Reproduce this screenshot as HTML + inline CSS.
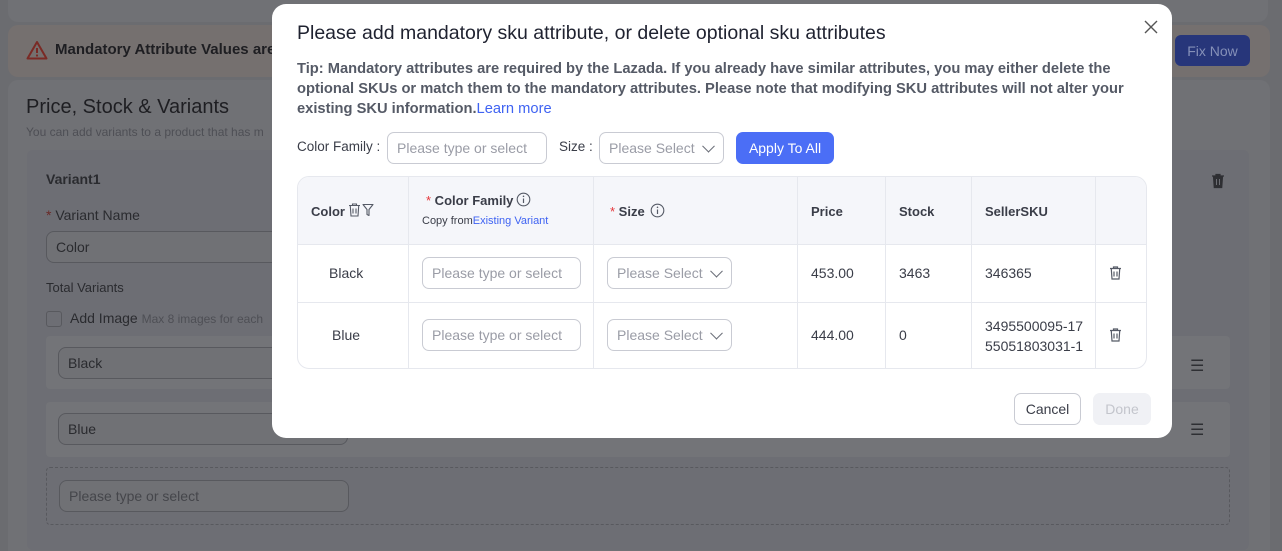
<!DOCTYPE html>
<html><head><meta charset="utf-8"><style>
*{box-sizing:border-box;margin:0;padding:0}
html,body{width:1282px;height:551px;overflow:hidden;background:#6b6c70}
body{font-family:"Liberation Sans",Arial,sans-serif;position:relative}
.a{position:absolute}
.inp{position:absolute;border:1px solid #c9cbd3;border-radius:7px;background:#fff;color:#9a9ca6;font-size:14px;padding-left:9px;display:flex;align-items:center;white-space:nowrap}
.bginp{position:absolute;border:1px solid #58595e;border-radius:8px;color:#2a2b2f;font-size:14px;padding-left:9px;display:flex;align-items:center;background:#707175}
.chev{position:absolute;right:10px;top:50%;width:9px;height:9px;border-right:1.5px solid #6b6e78;border-bottom:1.5px solid #6b6e78;transform:translateY(-70%) rotate(45deg)}
.th{position:absolute;font-size:13px;font-weight:bold;color:#3a3d48}
.td{position:absolute;font-size:14px;color:#3a3d48}
.vl{position:absolute;top:0;width:1px;height:193px;background:#e6e8ee}
.star{color:#e5363a;font-weight:normal}
</style></head><body>
<div class="a" style="left:8px;top:-10px;width:1260px;height:32px;background:#707175;border-radius:10px"></div>
<div class="a" style="left:8px;top:25px;width:1262px;height:52px;background:#75706f;border-radius:10px"></div>
<svg class="a" style="left:26px;top:40px" width="22" height="20" viewBox="0 0 22 20"><path d="M11 2L20.5 18.5H1.5Z" fill="none" stroke="#7a2a25" stroke-width="2" stroke-linejoin="round"/><path d="M11 8v5" stroke="#7a2a25" stroke-width="2"/><circle cx="11" cy="15.5" r="1.1" fill="#7a2a25"/></svg>
<div class="a" style="left:55px;top:41px;font-size:15px;font-weight:bold;color:#1e1e22">Mandatory Attribute Values are</div>
<div class="a" style="left:1175px;top:35px;width:75px;height:31px;background:#27367a;border-radius:6px;color:#8590b8;font-size:14px;display:flex;align-items:center;justify-content:center">Fix Now</div>
<div class="a" style="left:8px;top:80px;width:1262px;height:480px;background:#707175;border-radius:10px"></div>
<div class="a" style="left:26px;top:96px;font-size:20px;color:#1e1e22">Price, Stock &amp; Variants</div>
<div class="a" style="left:26px;top:125px;font-size:12px;color:#4e4f55">You can add variants to a product that has m</div>
<div class="a" style="left:27px;top:150px;width:1222px;height:400px;background:#6d6e74;border-radius:6px"></div>
<div class="a" style="left:46px;top:171px;font-size:14px;font-weight:bold;color:#2a2b2f">Variant1</div>
<svg class="a" style="left:1211px;top:173px" width="14" height="16" viewBox="0 0 14 16"><path d="M1 3h12M5 3V1.5h4V3M2.5 3.5l.8 11h7.4l.8-11" fill="#2e2f33" stroke="#2e2f33" stroke-width="1.2"/><path d="M5.5 6v6M8.5 6v6" stroke="#6d6e74" stroke-width="1"/></svg>
<div class="a" style="left:46px;top:207px;font-size:14px;color:#2a2b2f"><span style="color:#6a2a28">*</span> Variant Name</div>
<div class="bginp" style="left:46px;top:231px;width:240px;height:32px">Color</div>
<div class="a" style="left:46px;top:280px;font-size:13px;color:#2a2b2f">Total Variants</div>
<div class="a" style="left:46px;top:311px;width:16px;height:16px;border:1px solid #58595e;border-radius:3px"></div>
<div class="a" style="left:70px;top:310px;font-size:14px;color:#2a2b2f">Add Image <span style="font-size:12px;color:#4e4f55">Max 8 images for each</span></div>
<div class="a" style="left:46px;top:336px;width:1184px;height:53px;background:#737478;border-radius:4px"></div>
<div class="bginp" style="left:58px;top:347px;width:290px;height:32px">Black</div>
<div class="a" style="left:46px;top:402px;width:1184px;height:55px;background:#737478;border-radius:4px"></div>
<div class="bginp" style="left:58px;top:413px;width:290px;height:32px">Blue</div>
<div class="a" style="left:1190px;top:356px;font-size:16px;color:#2e2f33">☰</div>
<div class="a" style="left:1190px;top:420px;font-size:16px;color:#2e2f33">☰</div>
<div class="a" style="left:46px;top:467px;width:1184px;height:58px;border:1px dashed #58595e;border-radius:4px"></div>
<div class="bginp" style="left:59px;top:480px;width:290px;height:32px;color:#45464b">Please type or select</div>

<div class="a" style="left:272px;top:4px;width:900px;height:434px;background:#fff;border-radius:14px"></div>
<div class="a" style="left:297px;top:22px;font-size:19.5px;color:#1f2230">Please add mandatory sku attribute, or delete optional sku attributes</div>
<svg class="a" style="left:1144px;top:20px" width="14" height="14" viewBox="0 0 14 14"><path d="M1 1L13 13M13 1L1 13" stroke="#555" stroke-width="1.4"/></svg>
<div class="a" style="left:297px;top:59px;width:860px;font-size:14.7px;font-weight:bold;color:#555a66;line-height:20px">Tip: Mandatory attributes are required by the Lazada. If you already have similar attributes, you may either delete the optional SKUs or match them to the mandatory attributes. Please note that modifying SKU attributes will not alter your existing SKU information.<span style="font-weight:normal;color:#3f63f2">Learn more</span></div>
<div class="a" style="left:297px;top:139px;font-size:13.5px;color:#3a3d48">Color Family :</div>
<div class="inp" style="left:387px;top:132px;width:160px;height:32px">Please type or select</div>
<div class="a" style="left:559px;top:139px;font-size:13.5px;color:#3a3d48">Size :</div>
<div class="inp" style="left:599px;top:132px;width:125px;height:32px">Please Select<span class="chev"></span></div>
<div class="a" style="left:736px;top:132px;width:98px;height:32px;background:#4b6ef6;border-radius:7px;color:#fff;font-size:14px;display:flex;align-items:center;justify-content:center">Apply To All</div>

<div class="a" style="left:297px;top:176px;width:850px;height:193px;border:1px solid #e6e8ee;border-radius:12px;overflow:hidden">
 <div class="a" style="left:0;top:0;width:850px;height:68px;background:#f5f6fa;border-bottom:1px solid #e6e8ee"></div>
 <div class="a" style="left:0;top:125px;width:850px;height:1px;background:#e6e8ee"></div>
 <div class="vl" style="left:110px"></div><div class="vl" style="left:295px"></div><div class="vl" style="left:499px"></div><div class="vl" style="left:587px"></div><div class="vl" style="left:673px"></div><div class="vl" style="left:797px"></div>
</div>
<div class="th" style="left:311px;top:204px">Color</div>
<svg class="a" style="left:348px;top:203px" width="26" height="14" viewBox="0 0 26 14"><path d="M1 2.5h11M4.5 2.5V1h4v1.5M2.3 3l.7 10h7l.7-10M5 5.5v5M8 5.5v5" fill="none" stroke="#555a66" stroke-width="1.1"/><path d="M15 1.5h10l-4 5v6l-2-1v-5z" fill="none" stroke="#555a66" stroke-width="1.1" stroke-linejoin="round"/></svg>
<div class="th" style="left:426px;top:193px"><span class="star">*</span> Color Family</div>
<svg class="a" style="left:516px;top:192px" width="15" height="15" viewBox="0 0 15 15"><circle cx="7.5" cy="7.5" r="6.3" fill="none" stroke="#555a66" stroke-width="1.1"/><path d="M7.5 6.5v4.5" stroke="#555a66" stroke-width="1.2"/><circle cx="7.5" cy="4.3" r=".8" fill="#555a66"/></svg>
<div class="a" style="left:422px;top:215px;font-size:11px;color:#3a3d48">Copy from<span style="color:#3f63f2">Existing Variant</span></div>
<div class="th" style="left:610px;top:204px"><span class="star">*</span> Size</div>
<svg class="a" style="left:650px;top:203px" width="15" height="15" viewBox="0 0 15 15"><circle cx="7.5" cy="7.5" r="6.3" fill="none" stroke="#555a66" stroke-width="1.1"/><path d="M7.5 6.5v4.5" stroke="#555a66" stroke-width="1.2"/><circle cx="7.5" cy="4.3" r=".8" fill="#555a66"/></svg>
<div class="th" style="left:811px;top:204px">Price</div>
<div class="th" style="left:899px;top:204px">Stock</div>
<div class="th" style="left:985px;top:204px">SellerSKU</div>

<div class="td" style="left:329px;top:265px">Black</div>
<div class="inp" style="left:422px;top:257px;width:159px;height:32px">Please type or select</div>
<div class="inp" style="left:607px;top:257px;width:125px;height:32px">Please Select<span class="chev"></span></div>
<div class="td" style="left:811px;top:265px">453.00</div>
<div class="td" style="left:899px;top:265px">3463</div>
<div class="td" style="left:985px;top:265px">346365</div>
<div class="td" style="left:332px;top:327px">Blue</div>
<div class="inp" style="left:422px;top:319px;width:159px;height:32px">Please type or select</div>
<div class="inp" style="left:607px;top:319px;width:125px;height:32px">Please Select<span class="chev"></span></div>
<div class="td" style="left:811px;top:327px">444.00</div>
<div class="td" style="left:899px;top:327px">0</div>
<div class="td" style="left:985px;top:316px;line-height:20px">3495500095-17<br>55051803031-1</div>
<svg class="a" style="left:1109px;top:266px" width="13" height="14" viewBox="0 0 13 14"><path d="M1 2.5h11M4.5 2.5V1h4v1.5M2.3 3l.7 10h7l.7-10M5 5.5v5M8 5.5v5" fill="none" stroke="#555a66" stroke-width="1.2"/></svg>
<svg class="a" style="left:1109px;top:328px" width="13" height="14" viewBox="0 0 13 14"><path d="M1 2.5h11M4.5 2.5V1h4v1.5M2.3 3l.7 10h7l.7-10M5 5.5v5M8 5.5v5" fill="none" stroke="#555a66" stroke-width="1.2"/></svg>

<div class="a" style="left:1014px;top:393px;width:67px;height:32px;border:1px solid #c9cbd3;border-radius:7px;font-size:14px;color:#3a3d48;display:flex;align-items:center;justify-content:center">Cancel</div>
<div class="a" style="left:1093px;top:393px;width:58px;height:32px;background:#f0f1f5;border-radius:7px;font-size:14px;color:#c3c5cc;display:flex;align-items:center;justify-content:center">Done</div>
</body></html>
